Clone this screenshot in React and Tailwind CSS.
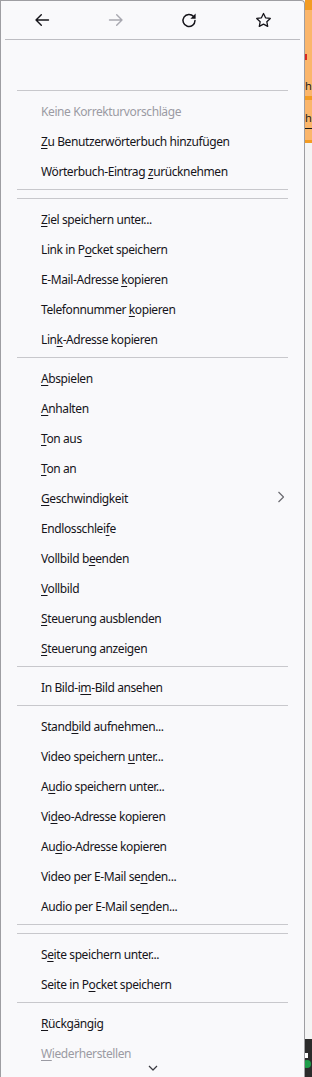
const SEP = "sep";

// [label before, accesskey, label after, disabled, submenu]
const items = [
  SEP,
  ["Keine Korrekturvorschläge", "", "", true],
  ["", "Z", "u Benutzerwörterbuch hinzufügen"],
  ["Wörterbuch-Eintrag ", "z", "urücknehmen"],
  SEP,
  SEP,
  ["", "Z", "iel speichern unter..."],
  ["Link in P", "o", "cket speichern"],
  ["E-Mail-Adresse ", "k", "opieren"],
  ["Telefonnummer ", "k", "opieren"],
  ["Lin", "k", "-Adresse kopieren"],
  SEP,
  ["", "A", "bspielen"],
  ["", "A", "nhalten"],
  ["", "T", "on aus"],
  ["", "T", "on an"],
  ["", "G", "eschwindigkeit", false, true],
  ["Endlosschlei", "f", "e"],
  ["Vollbild b", "e", "enden"],
  ["", "V", "ollbild"],
  ["", "S", "teuerung ausblenden"],
  ["", "S", "teuerung anzeigen"],
  SEP,
  ["In Bild-i", "m", "-Bild ansehen"],
  SEP,
  ["Stand", "b", "ild aufnehmen..."],
  ["Video speichern ", "u", "nter..."],
  ["A", "u", "dio speichern unter..."],
  ["Vi", "d", "eo-Adresse kopieren"],
  ["Au", "d", "io-Adresse kopieren"],
  ["Video per E-Mail se", "n", "den..."],
  ["Audio per E-Mail se", "n", "den..."],
  SEP,
  SEP,
  ["S", "e", "ite speichern unter..."],
  ["Seite in P", "o", "cket speichern"],
  SEP,
  ["", "R", "ückgängig"],
  ["", "W", "iederherstellen", true],
];

function Separator() {
  return (
    <div className="py-1">
      <div className="mx-4 h-px bg-[#c8c8cc]" />
    </div>
  );
}

function MenuItem({ item }) {
  const [before, key, after, disabled, submenu] = item;
  return (
    <div
      className={`flex h-[30px] items-center pl-10 pr-[19px] pt-[3px] ${
        disabled ? "text-[#9b9ba3]" : "text-[#15141a]"
      }`}
    >
      <span className="flex-1 whitespace-nowrap tracking-[-0.4px]">
        {before}
        {key && <u className="decoration-1 underline-offset-2">{key}</u>}
        {after}
      </span>
      {submenu && (
        <svg width="8" height="12" viewBox="0 0 8 12" fill="none" className="-mt-[3px]">
          <path d="M1.5 1l5 5-5 5" stroke="#6b6b70" strokeWidth="1.2" strokeLinejoin="round" />
        </svg>
      )}
    </div>
  );
}

function NavIcon({ children }) {
  return <div className="flex items-center justify-center">{children}</div>;
}

export default function App() {
  return (
    <div
      className="flex h-[1077px] w-[312px] overflow-hidden bg-white text-[12px]"
      style={{ fontFamily: '"Noto Sans", "Open Sans", sans-serif' }}
    >
      <div className="relative h-full w-[305px] shrink-0 overflow-hidden rounded-tr-[4px] border border-b-0 border-[#9e9ea2] bg-[#f9f9fb]">
        <div className="mx-1 grid h-[38px] grid-cols-4">
          <NavIcon>
            <svg width="16" height="16" viewBox="0 0 16 16" fill="none">
              <path d="M14.5 8H2M7.3 2.7L2 8l5.3 5.3" stroke="#15141a" strokeWidth="1.4" strokeLinecap="round" strokeLinejoin="round" />
            </svg>
          </NavIcon>
          <NavIcon>
            <svg width="16" height="16" viewBox="0 0 16 16" fill="none">
              <path d="M1.5 8H14M8.7 2.7L14 8l-5.3 5.3" stroke="#a8a8b0" strokeWidth="1.4" strokeLinecap="round" strokeLinejoin="round" />
            </svg>
          </NavIcon>
          <NavIcon>
            <svg width="16" height="16" viewBox="0 0 16 16" fill="none">
              <path d="M12.6 4.6A6 6 0 1 0 14 8.5" stroke="#15141a" strokeWidth="1.5" strokeLinecap="round" />
              <path d="M14.6 1.6v5.2H9.4z" fill="#15141a" />
            </svg>
          </NavIcon>
          <NavIcon>
            <svg width="17" height="17" viewBox="0 0 16 16" fill="none">
              <path
                d="M8 1.4l1.95 4.1 4.45.55-3.28 3.08.84 4.42L8 11.4l-3.96 2.15.84-4.42L1.6 6.05l4.45-.55z"
                stroke="#15141a"
                strokeWidth="1.2"
                strokeLinejoin="round"
              />
            </svg>
          </NavIcon>
        </div>
        <div className="mx-1 h-px bg-[#bdbdc2]" />
        <div className="h-[46px]" />
        {items.map((item, i) =>
          item === SEP ? <Separator key={i} /> : <MenuItem key={i} item={item} />
        )}
        <div className="absolute bottom-[6px] left-0 right-0 flex justify-center">
          <svg width="10" height="6" viewBox="0 0 10 6" fill="none">
            <path d="M1 1l4 4 4-4" stroke="#3a3a40" strokeWidth="1.2" strokeLinejoin="round" />
          </svg>
        </div>
      </div>

      <div className="flex h-full w-[7px] flex-col overflow-hidden">
        <div className="h-[10px] bg-[#f39c23]" />
        <div className="relative h-[86px] bg-[#fbb66b]">
          <div className="absolute left-0 top-[44px] h-[6px] w-[2px] bg-[#d8261f]" />
          <span className="absolute left-0 top-[70px] text-[11px] leading-none text-[#1a1a1a]">h</span>
        </div>
        <div className="h-[4px] bg-[#f39c23]" />
        <div className="relative h-[40px] bg-[#fbb66b]">
          <span className="absolute left-0 top-[12px] text-[11px] leading-none text-[#1a1a1a]">h</span>
          <div className="absolute left-0 right-0 top-[28px] h-px bg-[#1a1a1a]" />
        </div>
        <div className="h-[3px] bg-[#f39c23]" />
        <div className="flex-1 bg-[#f4f4f4]" />
        <div className="relative h-[38px] bg-[#2b2b2b]">
          <div className="absolute left-0 top-[14px] h-[5px] w-[3px] bg-white" />
          <div className="absolute left-[-2px] top-[21px] h-[8px] w-[8px] rounded-full bg-[#1e9e4a]" />
        </div>
      </div>
    </div>
  );
}
